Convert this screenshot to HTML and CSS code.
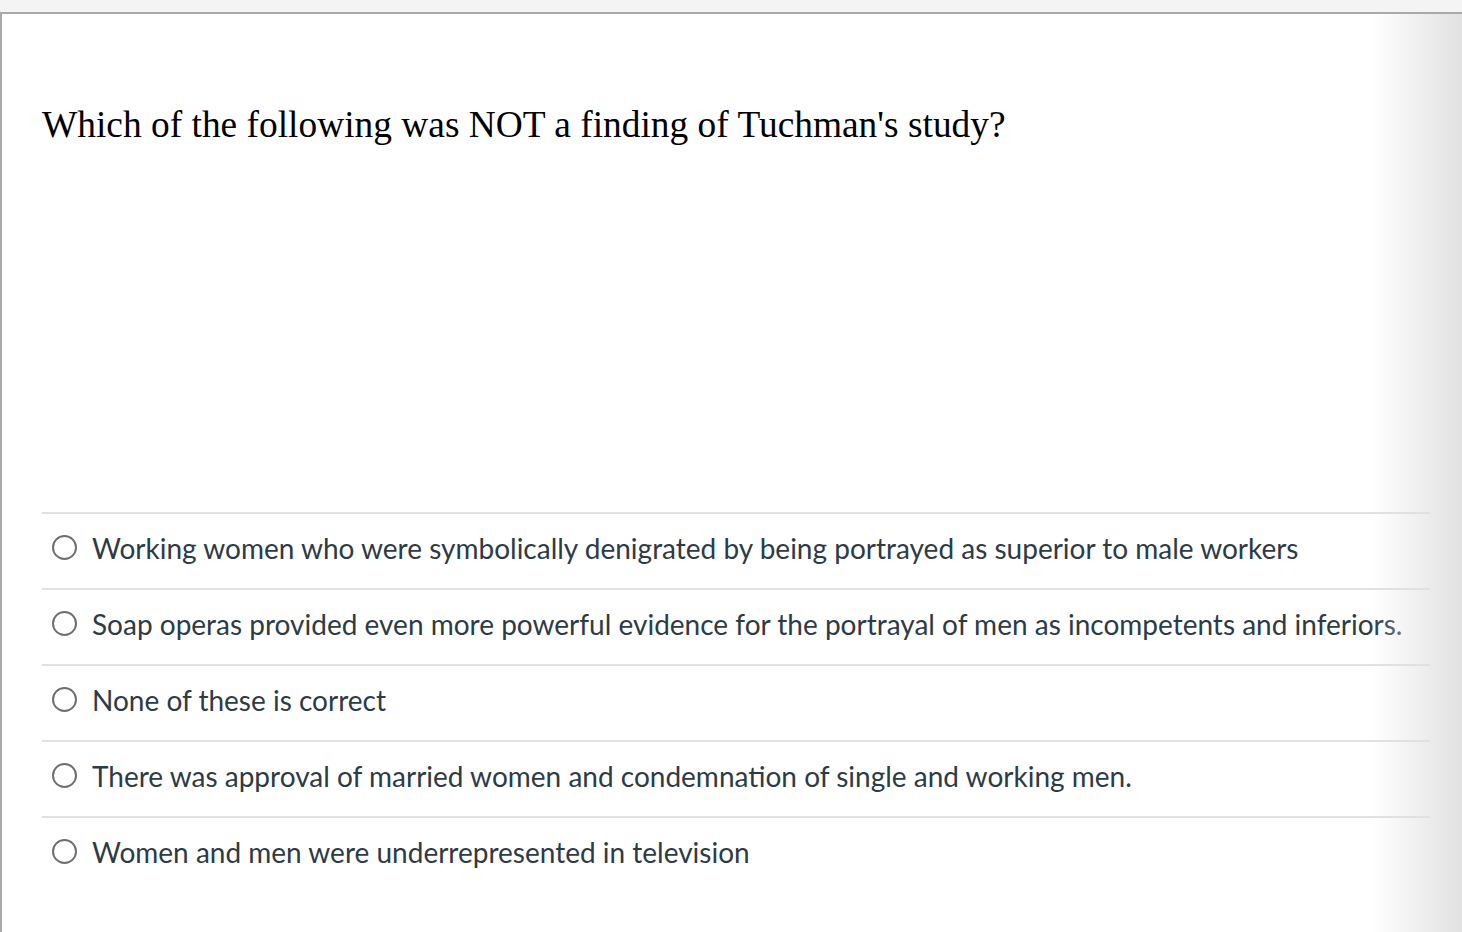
FILE: index.html
```html
<!DOCTYPE html>
<html>
<head>
<meta charset="utf-8">
<link rel="stylesheet" href="styles.css">
</head>
<body>
<div class="topbar"></div>
<div class="frame">
  <div class="content">
    <div class="question">Which of the following was NOT a finding of Tuchman's study?</div>
    <div class="answers">
      <div class="answer"><span class="radio"></span><span class="label">Working women who were symbolically denigrated by being portrayed as superior to male workers</span></div>
      <div class="answer"><span class="radio"></span><span class="label">Soap operas provided even more powerful evidence for the portrayal of men as incompetents and inferiors.</span></div>
      <div class="answer"><span class="radio"></span><span class="label">None of these is correct</span></div>
      <div class="answer"><span class="radio"></span><span class="label">There was approval of married women and condemnation of single and working men.</span></div>
      <div class="answer"><span class="radio"></span><span class="label">Women and men were underrepresented in television</span></div>
    </div>
  </div>
  <div class="shade"></div>
</div>
</body>
</html>
```
FILE: styles.css
```css
html, body { margin: 0; padding: 0; background: #fff; }
body { width: 1462px; height: 932px; overflow: hidden; position: relative; }
.topbar { height: 12px; background: #f4f4f4; border-bottom: 2px solid #a9a9a9; }
.frame { position: relative; height: 918px; border-left: 2px solid #a9a9a9; }
.content { padding: 0 32px 0 40px; }
.question {
  font-family: "Liberation Serif", "Times New Roman", serif;
  font-size: 37.4px;
  color: #000;
  box-sizing: border-box;
  padding-top: 90px;
  height: 498px;
  line-height: 42px;
}
.answers { width: 1388px; }
.answer {
  display: flex;
  align-items: center;
  height: 67px;
  padding-bottom: 7px;
  border-top: 2px solid #e1e1e1;
  font-family: Lato, "Liberation Sans", sans-serif;
  font-size: 28px;
  color: #2d3b45;
}
.radio {
  width: 21px; height: 21px;
  border: 2px solid #6f6f6f;
  border-radius: 50%;
  margin: 0 15px 0 10px;
  flex: none;
}
.shade {
  position: absolute; top: 0; right: 0; width: 90px; height: 100%;
  background: linear-gradient(to right, rgba(255,255,255,0), rgba(225,225,225,1));
  pointer-events: none;
}
```
